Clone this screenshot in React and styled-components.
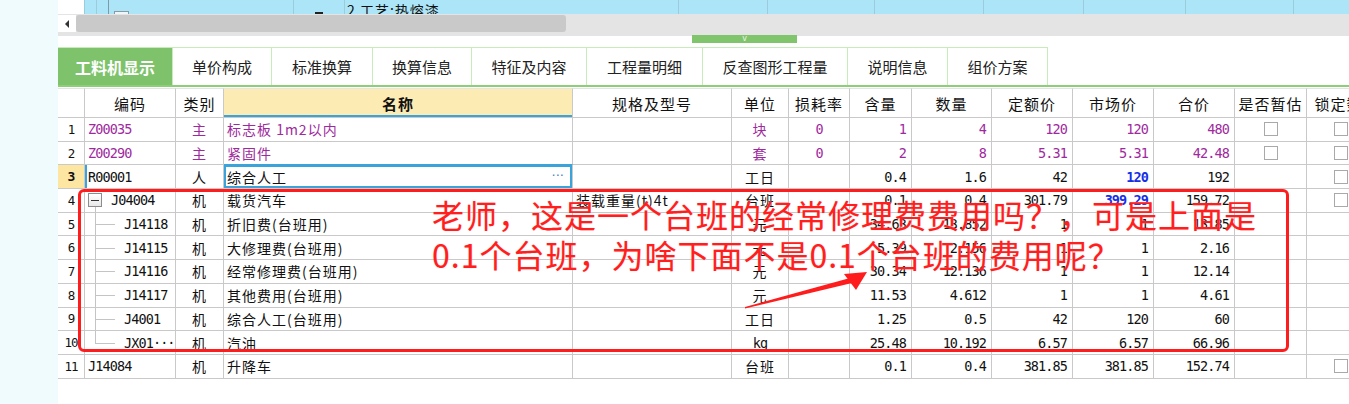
import React from "react";
import styled, { createGlobalStyle } from "styled-components";

const CJK = `"Noto Sans CJK SC", "Noto Sans", sans-serif`;
const MONO = `"DejaVu Sans Mono", "Liberation Mono", "Noto Sans CJK SC", monospace`;
const PURPLE = "#9e2a9e";
const LINE = "#c9c9c9";
const COLS = "27px 91px 48px 349px 159px 57px 61px 62px 80px 81px 81px 81px 72px 80px";

const tabs = ["工料机显示", "单价构成", "标准换算", "换算信息", "特征及内容", "工程量明细", "反查图形工程量", "说明信息", "组价方案"];
const tabWidths = [115, 99, 101, 99, 115, 116, 145, 100, 100];

const headers = ["", "编码", "类别", "名称", "规格及型号", "单位", "损耗率", "含量", "数量", "定额价", "市场价", "合价", "是否暂估", "锁定数量"];

const rows = [
  { n: "1", code: "Z00035", type: "主", name: "标志板 1m2以内", unit: "块", loss: "0", qty: "1", amt: "4", quota: "120", market: "120", total: "480", est: true, lock: true, color: PURPLE },
  { n: "2", code: "Z00290", type: "主", name: "紧固件", unit: "套", loss: "0", qty: "2", amt: "8", quota: "5.31", market: "5.31", total: "42.48", est: true, lock: true, color: PURPLE },
  { n: "3", code: "R00001", type: "人", name: "综合人工", unit: "工日", qty: "0.4", amt: "1.6", quota: "42", market: "120", blue: true, total: "192", lock: true, current: true },
  { n: "4", code: "J04004", tree: "root", type: "机", name: "载货汽车", spec: "装载重量(t)4t", unit: "台班", qty: "0.1", amt: "0.4", quota: "301.79", market: "399.29", blue: true, total: "159.72", lock: true },
  { n: "5", code: "J14118", tree: "mid", type: "机", name: "折旧费(台班用)", unit: "元", qty: "34.63", amt: "13.852", quota: "1", market: "1", total: "13.85" },
  { n: "6", code: "J14115", tree: "mid", type: "机", name: "大修理费(台班用)", unit: "元", qty: "5.39", amt: "2.156", quota: "1", market: "1", total: "2.16" },
  { n: "7", code: "J14116", tree: "mid", type: "机", name: "经常修理费(台班用)", unit: "元", qty: "30.34", amt: "12.136", quota: "1", market: "1", total: "12.14" },
  { n: "8", code: "J14117", tree: "mid", type: "机", name: "其他费用(台班用)", unit: "元", qty: "11.53", amt: "4.612", quota: "1", market: "1", total: "4.61" },
  { n: "9", code: "J4001", tree: "mid", type: "机", name: "综合人工(台班用)", unit: "工日", qty: "1.25", amt: "0.5", quota: "42", market: "120", total: "60" },
  { n: "10", code: "JX01···", tree: "last", type: "机", name: "汽油", unit: "kg", qty: "25.48", amt: "10.192", quota: "6.57", market: "6.57", total: "66.96" },
  { n: "11", code: "J14084", type: "机", name: "升降车", unit: "台班", qty: "0.1", amt: "0.4", quota: "381.85", market: "381.85", total: "152.74", lock: true },
];

const GlobalStyle = createGlobalStyle`
  html, body { margin: 0; padding: 0; background: #fff; }
  body { font-family: ${CJK}; color: #111; }
  * { box-sizing: border-box; }
`;

const Page = styled.div`
  display: flex;
  width: 1349px;
  height: 404px;
  overflow: hidden;
`;

const LeftStrip = styled.div`
  width: 58px;
  flex-shrink: 0;
  background: #f0fbfe;
`;

const Main = styled.div`
  flex: 1;
  min-width: 0;
  display: flex;
  flex-direction: column;
  overflow: hidden;
`;

const TopGrid = styled.div`
  height: 14px;
  display: grid;
  grid-template-columns: 27px 12px 12px 185px 51px 334px 89px 107px 109px 100px 102px 108px 80px;
  overflow: hidden;
`;

const TopCell = styled.div`
  position: relative;
  background: ${(p) => (p.$white ? "#fff" : "#ace5f7")};
  border-right: 1px solid ${(p) => (p.$dark ? "#7f9aa6" : "#9ccbdc")};
  overflow: hidden;
  display: flex;
  align-items: flex-start;
  justify-content: ${(p) => (p.$center ? "center" : "flex-start")};
`;

const TopText = styled.span`
  font-size: 14px;
  line-height: 14px;
  margin-top: 3px;
  padding-left: 2px;
  letter-spacing: 1px;
  white-space: nowrap;
  color: #111;
`;

const TopBox = styled.span`
  margin-top: 11px;
  margin-left: 5px;
  width: 15px;
  height: 15px;
  border: 1px solid #8a9aa2;
  background: #eef6f9;
`;

const TopDash = styled.span`
  margin-top: 12px;
  width: 8px;
  height: 2px;
  background: #222;
`;

const ScrollBar = styled.div`
  height: 22px;
  display: flex;
  background: #e4e4e4;
  padding-top: 1px;
`;

const ScrollArrow = styled.div`
  width: 18px;
  height: 17px;
  background: #fff;
  display: flex;
  align-items: center;
  justify-content: center;
  &::before {
    content: "";
    border-top: 4px solid transparent;
    border-bottom: 4px solid transparent;
    border-right: 4px solid #333;
  }
`;

const ScrollThumb = styled.div`
  width: 490px;
  height: 17px;
  background: #c9c9c9;
  border-radius: 3px;
`;

const Splitter = styled.div`
  height: 11px;
  display: flex;
  align-items: flex-start;
`;

const SplitHandle = styled.div`
  margin-left: 634px;
  width: 105px;
  height: 8px;
  margin-top: -1px;
  background: #80c56b;
  display: flex;
  justify-content: center;
  color: #eaf6e4;
  font-size: 8px;
  line-height: 7px;
  font-family: "DejaVu Sans", sans-serif;
`;

const TabBar = styled.div`
  display: flex;
  height: 40px;
  border-bottom: 2px solid #8ccf78;
  margin-bottom: 1px;
`;

const Tab = styled.div`
  height: 38px;
  border-top: 1px solid #c7ebba;
  border-right: 1px solid #c7ebba;
  background: ${(p) => (p.$active ? "#7ec36b" : "#fff")};
  color: ${(p) => (p.$active ? "#fff" : "#222")};
  font-size: ${(p) => (p.$active ? "16px" : "15px")};
  font-weight: ${(p) => (p.$active ? 700 : 400)};
  display: flex;
  align-items: center;
  justify-content: center;
  flex-shrink: 0;
`;

const TableArea = styled.div`
  position: relative;
  flex: 1;
  border-left: 1px solid #d6d6d6;
  margin-left: -1px;
`;

const Row = styled.div`
  display: grid;
  grid-template-columns: ${COLS};
  height: ${(p) => (p.$head ? "30px" : "23.7px")};
  color: ${(p) => p.$color || "#111"};
`;

const Cell = styled.div`
  position: relative;
  border-right: 1px solid ${LINE};
  border-bottom: 1px solid ${LINE};
  display: flex;
  align-items: center;
  justify-content: ${(p) => p.$align || "flex-start"};
  padding: ${(p) => (p.$align === "flex-end" ? "0 5px 0 0" : p.$align === "center" ? "0" : "0 0 0 3px")};
  font-size: 14px;
  letter-spacing: 1px;
  white-space: nowrap;
  overflow: hidden;
  background: ${(p) => p.$bg || "transparent"};
`;

const HeadCell = styled(Cell)`
  justify-content: center;
  padding: 0;
  font-size: 15px;
  font-weight: ${(p) => (p.$bold ? 700 : 400)};
  background: ${(p) => (p.$bold ? "#fdebb4" : "#fff")};
  border-top: 1px solid #e4e4e4;
  ${(p) => p.$bold && "box-shadow: inset 0 -2px 0 #3aa3d9;"}
`;

const NumCell = styled.div`
  border-right: 1px solid ${LINE};
  border-bottom: 1px solid ${LINE};
  display: flex;
  align-items: center;
  justify-content: center;
  font-family: ${MONO};
  font-size: ${(p) => (p.$current ? "13px" : "12.5px")};
  font-weight: ${(p) => (p.$current ? 700 : 400)};
  letter-spacing: -1px;
  color: #111;
  background: ${(p) => (p.$current ? "#fce6a2" : "#fff")};
  white-space: nowrap;
`;

const Mono = styled.span`
  font-family: ${MONO};
  font-size: 13.5px;
  letter-spacing: -0.9px;
  color: ${(p) => (p.$blue ? "#1530e6" : "inherit")};
  font-weight: ${(p) => (p.$blue ? 700 : 400)};
`;

const CodeCell = styled(Cell)`
  padding-left: ${(p) => (p.$tree === "root" ? "26px" : p.$tree ? "39px" : "3px")};
  ${(p) => p.$current && "box-shadow: inset 2px 0 0 #3aa3d9;"}
  &::before {
    content: "";
    display: ${(p) => (p.$tree ? "block" : "none")};
    position: absolute;
    left: 10px;
    width: 1px;
    background: #c4c4c4;
    top: ${(p) => (p.$tree === "root" ? "16px" : "0")};
    bottom: ${(p) => (p.$tree === "last" ? "50%" : "0")};
  }
  &::after {
    content: "";
    display: ${(p) => (p.$tree && p.$tree !== "root" ? "block" : "none")};
    position: absolute;
    left: 10px;
    width: 20px;
    top: 50%;
    height: 1px;
    background: #c4c4c4;
  }
`;

const Collapse = styled.span`
  position: absolute;
  left: 3px;
  top: 4px;
  width: 14px;
  height: 14px;
  border: 1px solid #8c8c8c;
  background: linear-gradient(#fff, #e8e8e8);
  display: flex;
  align-items: center;
  justify-content: center;
  &::after {
    content: "";
    width: 8px;
    height: 1px;
    background: #333;
  }
`;

const NameCell = styled(Cell)`
  ${(p) => p.$current && "box-shadow: inset 0 0 0 2px #3aa3d9;"}
  ${(p) => p.$above && "border-bottom-color: #3aa3d9;"}
`;

const Ellipsis = styled.span`
  position: absolute;
  right: 8px;
  top: 3px;
  color: #4a86bf;
  font-size: 13px;
  letter-spacing: 0;
  font-family: "DejaVu Sans", sans-serif;
`;

const Check = styled.span`
  width: 14px;
  height: 14px;
  border: 1px solid #a9a9a9;
  background: #fff;
`;

const RedBox = styled.div`
  position: absolute;
  left: 20px;
  top: 101px;
  width: 1211px;
  height: 163px;
  border: 3px solid #ff1c1c;
  border-radius: 6px;
  pointer-events: none;
`;

const Note = styled.div`
  position: absolute;
  left: 374px;
  top: 106px;
  font-family: ${CJK};
  font-size: 32px;
  line-height: 40px;
  letter-spacing: 1px;
  color: #ff1f1f;
  white-space: nowrap;
  text-shadow: 0 0 1px rgba(255, 160, 160, 0.8);
`;

const ArrowSvg = styled.svg`
  position: absolute;
  left: 682px;
  top: 177px;
`;

function TableRow({ r }) {
  const color = r.color;
  return (
    <Row $color={color}>
      <NumCell $current={r.current}>{r.n}</NumCell>
      <CodeCell $tree={r.tree} $current={r.current}>
        {r.tree === "root" && <Collapse />}
        <Mono>{r.code}</Mono>
      </CodeCell>
      <Cell $align="center">{r.type}</Cell>
      <NameCell $current={r.current} $above={r.n === "2"}>
        {r.name}
        {r.current && <Ellipsis>···</Ellipsis>}
      </NameCell>
      <Cell>{r.spec}</Cell>
      <Cell $align="center">{r.unit === "kg" ? <Mono>kg</Mono> : r.unit}</Cell>
      <Cell $align="center"><Mono>{r.loss}</Mono></Cell>
      <Cell $align="flex-end"><Mono>{r.qty}</Mono></Cell>
      <Cell $align="flex-end"><Mono>{r.amt}</Mono></Cell>
      <Cell $align="flex-end"><Mono>{r.quota}</Mono></Cell>
      <Cell $align="flex-end"><Mono $blue={r.blue}>{r.market}</Mono></Cell>
      <Cell $align="flex-end"><Mono>{r.total}</Mono></Cell>
      <Cell $align="center">{r.est && <Check />}</Cell>
      <Cell $align="flex-start">{r.lock && <Check style={{ marginLeft: 24 }} />}</Cell>
    </Row>
  );
}

export default function App() {
  return (
    <>
      <GlobalStyle />
      <Page>
        <LeftStrip />
        <Main>
          <TopGrid>
            <TopCell $white />
            <TopCell />
            <TopCell $dark />
            <TopCell><TopBox /></TopCell>
            <TopCell $center><TopDash /></TopCell>
            <TopCell><TopText>2 工艺:热熔漆</TopText></TopCell>
            <TopCell />
            <TopCell />
            <TopCell />
            <TopCell />
            <TopCell />
            <TopCell />
            <TopCell />
          </TopGrid>
          <ScrollBar>
            <ScrollArrow />
            <ScrollThumb />
          </ScrollBar>
          <Splitter>
            <SplitHandle>v</SplitHandle>
          </Splitter>
          <TabBar>
            {tabs.map((t, i) => (
              <Tab key={t} $active={i === 0} style={{ width: tabWidths[i] }}>
                {t}
              </Tab>
            ))}
          </TabBar>
          <TableArea>
            <Row $head>
              {headers.map((h, i) => (
                <HeadCell key={i} $bold={h === "名称"}>{h}</HeadCell>
              ))}
            </Row>
            {rows.map((r) => (
              <TableRow key={r.n} r={r} />
            ))}
            <RedBox />
            <Note>
              <div>老师，这是一个台班的经常修理费费用吗？，可是上面是</div>
              <div>0.1个台班，为啥下面不是0.1个台班的费用呢？</div>
            </Note>
            <ArrowSvg width="140" height="50" viewBox="0 0 140 50">
              <polygon points="5,42 110,13 112,18 5,43.5" fill="#ff1c1c" />
              <polygon points="127,7 104,9 116,25" fill="#ff1c1c" />
            </ArrowSvg>
          </TableArea>
        </Main>
      </Page>
    </>
  );
}
